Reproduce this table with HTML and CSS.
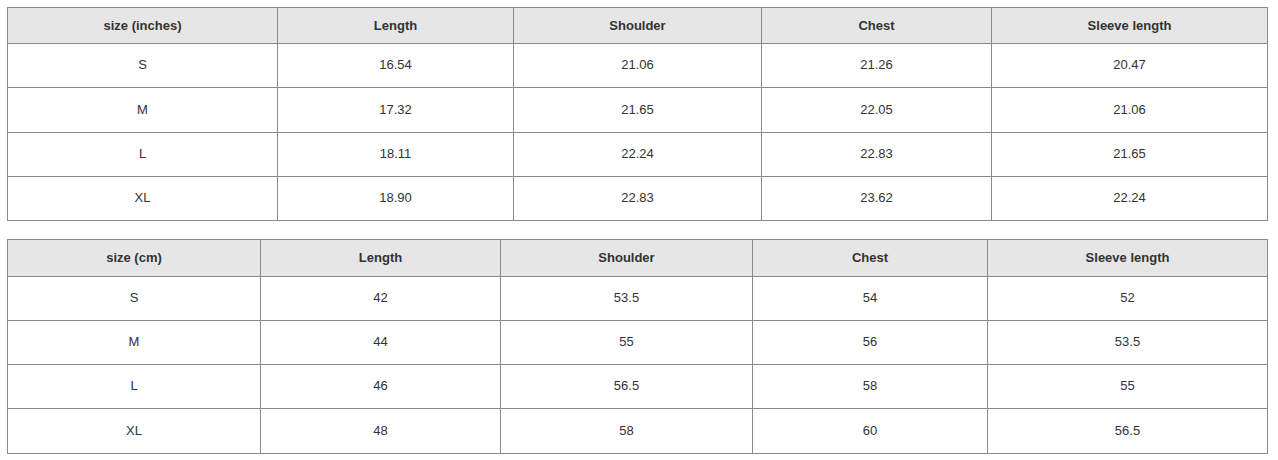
FILE: index.html
```html
<!DOCTYPE html>
<html>
<head>
<meta charset="utf-8">
<link rel="stylesheet" href="styles.css">
</head>
<body>
<div class="page">
  <div class="grid grid-in">
    <div class="cell head">size (inches)</div>
    <div class="cell head">Length</div>
    <div class="cell head">Shoulder</div>
    <div class="cell head">Chest</div>
    <div class="cell head">Sleeve length</div>
    <div class="cell">S</div><div class="cell">16.54</div><div class="cell">21.06</div><div class="cell">21.26</div><div class="cell">20.47</div>
    <div class="cell">M</div><div class="cell">17.32</div><div class="cell">21.65</div><div class="cell">22.05</div><div class="cell">21.06</div>
    <div class="cell">L</div><div class="cell">18.11</div><div class="cell">22.24</div><div class="cell">22.83</div><div class="cell">21.65</div>
    <div class="cell">XL</div><div class="cell">18.90</div><div class="cell">22.83</div><div class="cell">23.62</div><div class="cell">22.24</div>
  </div>
  <div class="grid grid-cm">
    <div class="cell head">size (cm)</div>
    <div class="cell head">Length</div>
    <div class="cell head">Shoulder</div>
    <div class="cell head">Chest</div>
    <div class="cell head">Sleeve length</div>
    <div class="cell">S</div><div class="cell">42</div><div class="cell">53.5</div><div class="cell">54</div><div class="cell">52</div>
    <div class="cell">M</div><div class="cell">44</div><div class="cell">55</div><div class="cell">56</div><div class="cell">53.5</div>
    <div class="cell">L</div><div class="cell">46</div><div class="cell">56.5</div><div class="cell">58</div><div class="cell">55</div>
    <div class="cell">XL</div><div class="cell">48</div><div class="cell">58</div><div class="cell">60</div><div class="cell">56.5</div>
  </div>
</div>
</body>
</html>
```
FILE: styles.css
```css
html, body {
  margin: 0;
  padding: 0;
  background: #fff;
}
.page {
  padding: 7px 0 0 7px;
  display: flex;
  flex-direction: column;
  gap: 18px;
  font-family: "Liberation Sans", Arial, sans-serif;
  font-size: 13px;
  color: #333;
}
.grid {
  width: 1261px;
  box-sizing: border-box;
  display: grid;
  gap: 1px;
  padding: 1px;
  background: #8a8a8a;
}
.grid-in {
  grid-template-columns: 269px 235px 247px 229px 1fr;
  grid-template-rows: 35px 43px 44px 43px 43px;
}
.grid-cm {
  grid-template-columns: 252px 239px 251px 234px 1fr;
  grid-template-rows: 36px 43px 43px 43px 44px;
}
.cell {
  background: #fff;
  display: flex;
  align-items: center;
  justify-content: center;
  padding-bottom: 2px;
}
.head {
  background: #e6e6e6;
  font-weight: bold;
  padding-bottom: 0;
}
.grid-cm .head {
  padding-bottom: 2px;
}
```
